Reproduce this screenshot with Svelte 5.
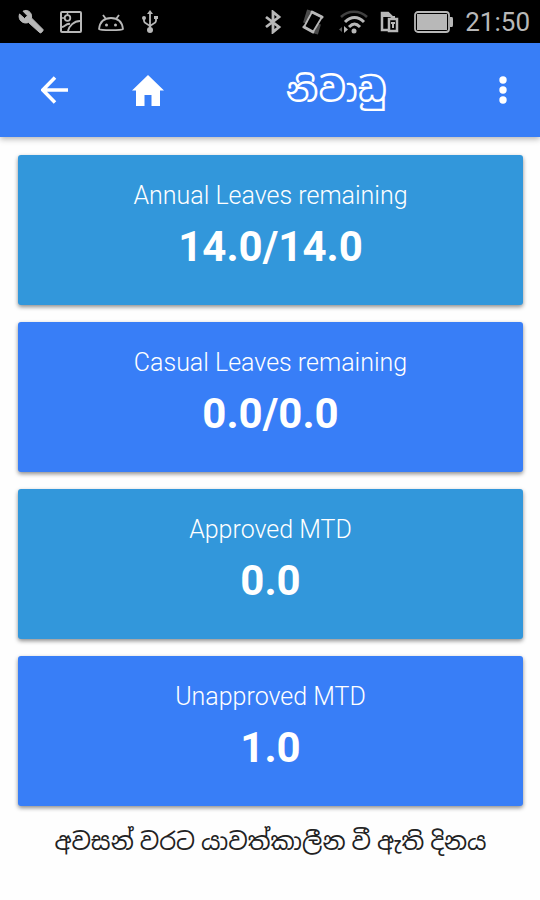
<script lang="ts">
	interface LeaveCard {
		label: string;
		value: string;
		alt: boolean;
	}

	const cards: LeaveCard[] = [
		{ label: 'Annual Leaves remaining', value: '14.0/14.0', alt: false },
		{ label: 'Casual Leaves remaining', value: '0.0/0.0', alt: true },
		{ label: 'Approved MTD', value: '0.0', alt: false },
		{ label: 'Unapproved MTD', value: '1.0', alt: true }
	];
</script>

<div class="screen" lang="si">
	<!-- Device status bar -->
	<div class="status-bar">
		<div class="status-group left">
			<!-- Wrench -->
			<svg width="26" height="26" viewBox="0 0 26 26" aria-hidden="true">
				<path
					d="M1.5 5 6.5 9.500 9.500 6.800 5 2.200C9-.2 14.500 3 13.500 9L25 20.500c.8 1-2 4.200-3.200 3.200L10.500 13.500C5.500 15.500-.5 11.500 1.500 5Z"
					fill="currentColor"
					stroke="currentColor"
					stroke-width="1"
				/>
			</svg>
			<!-- Picture -->
			<svg width="22" height="22" viewBox="0 0 22 22" fill="none" stroke="currentColor" aria-hidden="true">
				<rect x="1" y="1" width="20" height="20" rx="1" stroke-width="2" />
				<circle cx="7.5" cy="7" r="2.8" stroke-width="1.8" />
				<path d="M2 7h3M7.500 2v2" stroke-width="1.500" />
				<path d="M2 16c3 0 4-4 8-3M8 20c1-5 6-10 12-10" stroke-width="2" />
			</svg>
			<!-- Android head -->
			<svg width="26" height="22" viewBox="0 0 26 22" fill="none" stroke="currentColor" aria-hidden="true">
				<path
					d="M1 18C2 10 6 7 13 7s11 3 12 11c-1 1.500-23 1.500-24 0ZM5 4l3 4M21 4l-3 4"
					stroke-width="1.8"
				/>
				<circle cx="8.5" cy="14" r="1.500" fill="currentColor" stroke="none" />
				<circle cx="17.5" cy="14" r="1.500" fill="currentColor" stroke="none" />
			</svg>
			<!-- USB -->
			<svg class="usb" width="20" height="24" viewBox="-2 0 20 24" fill="none" stroke="currentColor" aria-hidden="true">
				<path d="M8 3v17M2 8v3c0 3 6 3 6 6M14 8v3c0 3-6 3-6 6" stroke-width="1.8" />
				<path d="m8 0 3 4H5Z" fill="currentColor" stroke="none" />
				<circle cx="2" cy="8" r="2" fill="currentColor" stroke="none" />
				<path d="M12 6h4v3h-4Z" fill="currentColor" stroke="none" />
				<circle cx="8" cy="20" r="3" fill="currentColor" stroke="none" />
			</svg>
		</div>
		<div class="status-group right">
			<!-- Bluetooth -->
			<svg width="26" height="24" viewBox="0 0 26 24" fill="none" stroke="currentColor" aria-hidden="true">
				<path d="m2 7 13 10-6 5V2l6 5L2 17" stroke-width="2.8" />
			</svg>
			<!-- Vibrating phone -->
			<svg width="24" height="26" viewBox="0 0 24 26" fill="none" stroke="currentColor" aria-hidden="true">
				<path d="m10 3 10 5-9 15-9-5Z" stroke-width="1.8" stroke-linejoin="round" />
				<path d="m10 3 10 5M2 18l9 5" stroke-width="3" stroke-linecap="round" />
				<path d="M7 1 3 14M14 25l3-10" stroke-width="4" opacity=".4" />
			</svg>
			<!-- Wi-Fi -->
			<svg width="30" height="24" viewBox="0 0 30 24" fill="none" stroke="currentColor" aria-hidden="true">
				<path d="M3 7c7-7 19-7 26 0" stroke-width="2.5" opacity=".35" />
				<path d="M7 12c6-6 13-6 19 0M11 17c4-4 7-4 11 0" stroke-width="3" />
				<circle cx="16" cy="21" r="2.5" fill="currentColor" stroke="none" />
				<path d="M6 16v7l4-3.500Z" fill="currentColor" stroke="none" />
				<path d="M4 17v5l-3-2.500Z" fill="currentColor" stroke="none" opacity=".5" />
			</svg>
			<!-- SIM with battery -->
			<svg width="22" height="22" viewBox="0 0 22 22" fill="none" stroke="currentColor" aria-hidden="true">
				<path d="M9 19H2V2h6l4 4" stroke-width="2.5" />
				<path d="M1 1h7l4 5H1Z" fill="currentColor" stroke="none" />
				<rect x="9" y="8" width="8" height="12" stroke-width="2.5" />
				<path d="M11 6h4M11 12h4M13 12v5" stroke-width="2" />
			</svg>
			<!-- Battery -->
			<svg width="39" height="22" viewBox="0 0 39 22" aria-hidden="true">
				<rect x="1" y="1" width="34" height="20" rx="3" fill="none" stroke="currentColor" stroke-width="1.8" />
				<rect x="3" y="3" width="30" height="16" fill="currentColor" />
				<path d="M36 6h2q1 0 1 2v6q0 2-1 2h-2Z" fill="currentColor" />
			</svg>
			<time class="clock" datetime="21:50">21:50</time>
		</div>
	</div>

	<!-- App toolbar -->
	<header class="toolbar">
		<button class="icon-button" type="button" aria-label="Back">
			<svg width="28" height="28" viewBox="0 0 28 28" fill="none" stroke="currentColor" aria-hidden="true">
				<path d="M27 14H2M14 1.500 1.800 14 14 26.500" stroke-width="3.500" />
			</svg>
		</button>
		<button class="icon-button home" type="button" aria-label="Home">
			<svg width="32" height="32" viewBox="0 0 32 32" fill="currentColor" aria-hidden="true">
				<path d="m16 1 16 15.500h-4V32h-8.500V21h-7v11H4V16.500H0Z" />
			</svg>
		</button>
		<h1 class="title">නිවාඩු</h1>
		<button class="icon-button" type="button" aria-label="More options">
			<svg width="8" height="28" viewBox="0 0 8 28" fill="currentColor" aria-hidden="true">
				<circle cx="4" cy="4" r="3.700" />
				<circle cx="4" cy="14" r="3.700" />
				<circle cx="4" cy="24" r="3.700" />
			</svg>
		</button>
	</header>

	<!-- Leave balances -->
	<main class="content">
		{#each cards as card}
			<section class="card" class:alt={card.alt}>
				<h2 class="label" lang="en">{card.label}</h2>
				<p class="value">{card.value}</p>
			</section>
		{/each}
		<p class="updated">අවසන් වරට යාවත්කාලීන වී ඇති දිනය</p>
	</main>
</div>

<style>
	:global(body) {
		margin: 0;
		background: #fefefe;
	}

	.screen {
		min-height: 100vh;
		background: #fefefe;
		font-family: Roboto, 'Noto Sans Sinhala', 'Noto Sans', sans-serif;
	}

	.screen svg {
		display: block;
		flex-shrink: 0;
	}

	/* Status bar */
	.status-bar {
		display: flex;
		align-items: center;
		justify-content: space-between;
		height: 43px;
		padding: 0 10px 0 18px;
		background: #000;
		color: #b8b8b8;
	}

	.status-group {
		display: flex;
		align-items: center;
	}

	.left {
		gap: 16px;
	}

	.right {
		gap: 12px;
	}

	.clock {
		font-size: 26px;
		line-height: 32px;
	}

	/* Toolbar */
	.toolbar {
		display: flex;
		align-items: center;
		height: 94px;
		padding: 0 10px 0 28px;
		background: #387ef7;
		color: #fff;
		box-shadow: 0 2px 6px rgba(0, 0, 0, 0.3);
	}

	.icon-button {
		display: flex;
		align-items: center;
		justify-content: center;
		width: 54px;
		height: 54px;
		padding: 0;
		border: none;
		background: transparent;
		color: inherit;
		cursor: pointer;
	}

	.home {
		margin-left: 39px;
	}

	.title {
		flex: 1;
		margin: 0;
		padding-left: 22px;
		font-size: 34px;
		font-weight: 400;
		line-height: 54px;
		text-align: center;
	}

	/* Cards */
	.content {
		display: flex;
		flex-direction: column;
		gap: 17px;
		padding: 18px 17px 18px 18px;
	}

	.card {
		padding: 25px 16px 30px;
		border-radius: 3px;
		background: #3297db;
		color: #fff;
		text-align: center;
		box-shadow: 0 2px 4px rgba(0, 0, 0, 0.45);
	}

	.card.alt {
		background: #387ef7;
	}

	.label {
		margin: 0;
		font-size: 25px;
		font-weight: 300;
		line-height: 32px;
	}

	.value {
		margin: 7px 0 0;
		font-size: 42px;
		font-weight: 700;
		line-height: 56px;
	}

	.updated {
		margin: 0;
		color: #222;
		font-size: 24px;
		line-height: 38px;
		text-align: center;
	}
</style>
